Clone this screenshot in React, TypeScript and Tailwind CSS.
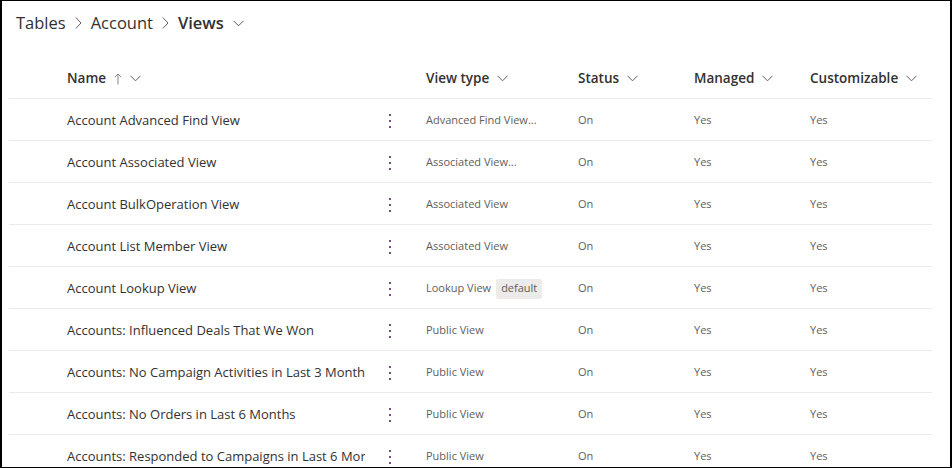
import React from "react";

const font = { fontFamily: '"Open Sans", "Noto Sans", sans-serif' };

function ChevronDown({ className = "" }: { className?: string }) {
  return (
    <svg width="11" height="7" viewBox="0 0 11 7" className={className} fill="none">
      <path d="M0.5 0.8 L5.5 5.8 L10.5 0.8" stroke="#605e5c" strokeWidth="1" />
    </svg>
  );
}

function ChevronRight() {
  return (
    <svg width="7" height="12" viewBox="0 0 7 12" fill="none">
      <path d="M0.8 0.5 L6 6 L0.8 11.5" stroke="#605e5c" strokeWidth="1" />
    </svg>
  );
}

function ArrowUp() {
  return (
    <svg width="8" height="12" viewBox="0 0 8 12" fill="none">
      <path d="M4 11.5 V1 M0.8 4.2 L4 1 L7.2 4.2" stroke="#8a8886" strokeWidth="1" />
    </svg>
  );
}

function Kebab() {
  return (
    <div className="flex flex-col gap-[4px]">
      <span className="block w-[2px] h-[2px] bg-[#7b4a7d]" />
      <span className="block w-[2px] h-[2px] bg-[#7b4a7d]" />
      <span className="block w-[2px] h-[2px] bg-[#7b4a7d]" />
    </div>
  );
}

type Row = { name: string; type: string; badge?: boolean };

const rows: Row[] = [
  { name: "Account Advanced Find View", type: "Advanced Find View..." },
  { name: "Account Associated View", type: "Associated View..." },
  { name: "Account BulkOperation View", type: "Associated View" },
  { name: "Account List Member View", type: "Associated View" },
  { name: "Account Lookup View", type: "Lookup View", badge: true },
  { name: "Accounts: Influenced Deals That We Won", type: "Public View" },
  { name: "Accounts: No Campaign Activities in Last 3 Months", type: "Public View" },
  { name: "Accounts: No Orders in Last 6 Months", type: "Public View" },
  { name: "Accounts: Responded to Campaigns in Last 6 Months", type: "Public View" },
];

const grid = "grid grid-cols-[58px_298px_61px_152px_116px_116px_122px] items-center";

export default function App() {
  return (
    <div
      className="w-[952px] h-[468px] overflow-hidden bg-white border-black border-t border-b border-l-2 border-r-2 box-border"
      style={font}
    >
      <div className="flex items-center h-[44px] pl-[14px] text-[16.5px] text-[#323130]">
        <span>Tables</span>
        <span className="mx-[9px] flex items-center"><ChevronRight /></span>
        <span>Account</span>
        <span className="mx-[9px] flex items-center"><ChevronRight /></span>
        <span className="font-semibold">Views</span>
        <span className="ml-[9px] flex items-center"><ChevronDown /></span>
      </div>
      <div className="ml-[7px] w-[923px]">
        <div className={`${grid} h-[54px] pt-[14px] border-b border-[#edebe9] text-[13.5px] font-semibold text-[#323130]`}>
          <div />
          <div className="flex items-center gap-[8px]">
            <span>Name</span>
            <ArrowUp />
            <ChevronDown />
          </div>
          <div />
          <div className="flex items-center gap-[8px]">
            <span>View type</span>
            <ChevronDown />
          </div>
          <div className="flex items-center gap-[8px]">
            <span>Status</span>
            <ChevronDown />
          </div>
          <div className="flex items-center gap-[8px]">
            <span>Managed</span>
            <ChevronDown />
          </div>
          <div className="flex items-center gap-[8px]">
            <span>Customizable</span>
            <ChevronDown />
          </div>
        </div>
        {rows.map((r) => (
          <div key={r.name} className={`${grid} h-[42px] pt-[2px] border-b border-[#edebe9]`}>
            <div />
            <div className="overflow-hidden whitespace-nowrap text-[13px] text-[#323130]">{r.name}</div>
            <div className="pl-[24px] flex items-center"><Kebab /></div>
            <div className="flex items-center text-[11px] text-[#605e5c] whitespace-nowrap">
              <span>{r.type}</span>
              {r.badge && (
                <span className="ml-[5px] px-[5px] h-[20px] flex items-center bg-[#edebe9] text-[#605e5c] rounded-[2px] text-[11px]">
                  default
                </span>
              )}
            </div>
            <div className="text-[11px] text-[#605e5c]">On</div>
            <div className="text-[11px] text-[#605e5c]">Yes</div>
            <div className="text-[11px] text-[#605e5c]">Yes</div>
          </div>
        ))}
      </div>
    </div>
  );
}
